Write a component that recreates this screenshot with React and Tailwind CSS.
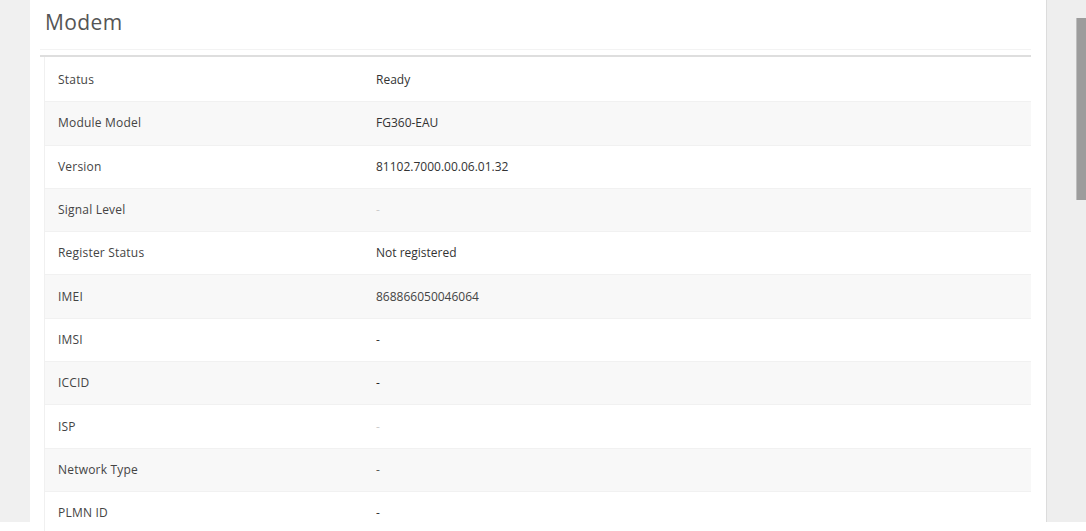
import React from "react";

const rows = [
  ["Status", "Ready", "text-[#333]"],
  ["Module Model", "FG360-EAU", "text-[#333]"],
  ["Version", "81102.7000.00.06.01.32", "text-[#333]"],
  ["Signal Level", "-", "text-[#ccc]"],
  ["Register Status", "Not registered", "text-[#333]"],
  ["IMEI", "868866050046064", "text-[#444]"],
  ["IMSI", "-", "text-[#333]"],
  ["ICCID", "-", "text-[#222]"],
  ["ISP", "-", "text-[#ccc]"],
  ["Network Type", "-", "text-[#555]"],
  ["PLMN ID", "-", "text-[#333]"],
];

export default function App() {
  return (
    <div
      className="w-[1086px] h-[531px] overflow-hidden bg-white flex"
      style={{ fontFamily: '"Open Sans", "Noto Sans", sans-serif' }}
    >
      <div className="w-[30px] shrink-0">
        <div className="h-[522px] bg-[#f0f0f0]" />
      </div>
      <div className="w-[1016px] shrink-0 bg-white pl-[10px] pr-[15px]">
        <div className="h-[50px] border-b border-[#f3f3f3] pl-[5px] pt-[8px]">
          <h1 className="text-[21px] leading-[28px] text-[#555] font-normal tracking-[0.4px]">Modem</h1>
        </div>
        <div className="mt-[5px] border-t-2 border-[#dedede]">
          <div className="ml-[4px] border-l border-[#f0f0f0] pt-[2px]">
            {rows.map(([k, v, c], i) => (
              <div
                key={k}
                className={
                  "h-[43.3px] flex items-center border-b border-[#f1f1f1] text-[12px] " +
                  (i % 2 === 1 ? "bg-[#f8f8f8]" : "bg-white")
                }
              >
                <div className="w-[331px] pl-[13px] text-[#444] tracking-[0.2px]">{k}</div>
                <div className={c}>{v}</div>
              </div>
            ))}
          </div>
        </div>
      </div>
      <div className="w-[40px] shrink-0">
        <div className="h-[522px] bg-[#eeeeee] border-l border-[#dcdcdc] relative">
          <div className="absolute left-[29px] top-[18px] w-[10px] h-[182px] bg-[#9c9c9c] border-l border-[#bdbdbd]" />
        </div>
      </div>
    </div>
  );
}
